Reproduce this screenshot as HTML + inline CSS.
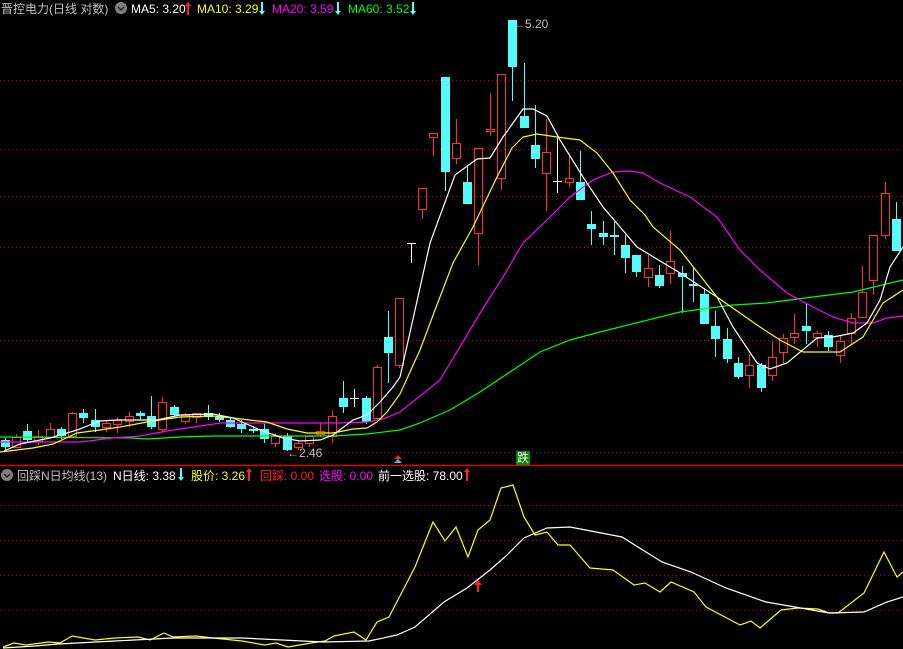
<!DOCTYPE html>
<html><head><meta charset="utf-8">
<style>
html,body{margin:0;padding:0;background:#000;width:903px;height:649px;overflow:hidden}
svg{position:absolute;left:0;top:0}
.t{font-family:"Liberation Sans","Noto Sans CJK SC",sans-serif;font-size:12px}
</style></head>
<body>
<svg id="s" width="903" height="649" xmlns="http://www.w3.org/2000/svg">
<defs>
<path id="au" d="M0,0 l-3,4 h2 v9 h2 v-9 h2 z"/>
<path id="ad" d="M0,13 l-3,-4 h2 v-9 h2 v9 h2 z"/>
</defs>
<g stroke="#c00000" stroke-width="1" stroke-dasharray="1 3" shape-rendering="crispEdges">
<line x1="0" y1="80.5" x2="903" y2="80.5"/>
<line x1="0" y1="149.5" x2="903" y2="149.5"/>
<line x1="0" y1="196.5" x2="903" y2="196.5"/>
<line x1="0" y1="247.5" x2="903" y2="247.5"/>
<line x1="0" y1="340.5" x2="903" y2="340.5"/>
<line x1="0" y1="452.5" x2="903" y2="452.5"/>
<line x1="0" y1="505.5" x2="903" y2="505.5"/>
<line x1="0" y1="540.5" x2="903" y2="540.5"/>
<line x1="0" y1="575.5" x2="903" y2="575.5"/>
<line x1="0" y1="610.5" x2="903" y2="610.5"/>
</g>
<line x1="0" y1="465.5" x2="903" y2="465.5" stroke="#e00000" stroke-width="1.5"/>
<g id="c" shape-rendering="crispEdges"></g>
<g fill="none" stroke-width="1.2">
<polyline stroke="#00ff00" points="0,437 133,438 147,439 180,437 213,436 300,436 333,436 367,434 400,430 420,423 450,410 480,392 510,372 540,352 570,340 600,332 680,312 733,305 767,303 813,297 853,292 903,280"/>
<polyline stroke="#ff00ff" points="0,442 80,442 113,438 140,436 167,431 187,428 220,423 273,423 300,423 340,423 367,422 383,419 400,412 440,380 482,310 503,277 523,243 547,220 570,197 593,180 613,172 630,171 643,173 660,183 690,197 717,217 740,250 760,270 787,293 813,307 833,317 853,323 873,323 887,318 903,316"/>
<polyline stroke="#ffff00" points="0,452 33,448 53,444 77,433 100,430 120,427 147,422 180,417 213,416 233,418 267,422 287,429 307,433 333,433 353,429 367,428 377,422 387,412 400,394 420,350 435,310 453,263 473,227 497,177 512,148 523,137 537,134 557,137 580,140 597,153 613,173 630,200 645,215 653,227 680,250 717,297 760,327 780,340 803,352 840,352 863,337 883,303 903,290"/>
<polyline stroke="#ffffff" points="4,451 20,444 50,438 77,430 100,421 117,420 157,420 180,415 213,414 233,418 260,430 283,438 300,441 320,440 333,435 353,420 367,415 380,402 393,387 400,377 415,310 430,243 455,175 477,159 490,158 503,137 523,109 533,109 547,116 560,140 583,177 603,207 620,227 637,247 680,273 717,297 733,327 757,363 770,369 787,363 817,338 833,337 853,333 867,323 880,300 890,267 903,247"/>
<polyline stroke="#ffff00" points="3,647 14,643 26,645 49,642 60,643 72,636 95,640 115,638 138,637 150,640 164,633 173,637 196,636 213,638 242,641 265,645 276,643 288,647 311,643 325,641 334,636 354,632 366,640 377,622 389,617 415,567 433,522 445,541 456,527 468,557 478,530 490,520 501,488 513,485 524,517 535,535 547,532 558,545 570,545 590,568 613,570 634,585 645,583 660,592 671,582 694,592 706,607 740,625 751,621 760,628 781,610 798,608 818,609 829,613 838,613 864,593 884,552 897,577 903,572"/>
<polyline stroke="#ffffff" points="3,648 35,646 58,644 115,641 173,638 242,638 323,642 369,641 397,635 415,627 444,602 467,588 490,570 507,555 524,538 547,528 570,527 622,537 662,562 691,572 726,588 766,602 795,607 829,613 864,612 887,602 903,597"/>
</g>
<path d="M478,580 l-4,5 h3 v7 h2 v-7 h3 z" fill="#ff2020"/>
<path d="M398,455 l-4,4 h8 z" fill="#ff2020"/><path d="M398,459 l-4,4 h8 z" fill="#40c0ff"/>
<rect x="516" y="451" width="14" height="14" fill="#008800"/>
<text x="517" y="462" class="t" fill="#fff" font-size="12">跌</text>
<text x="513" y="28" class="t" fill="#c0c0c0">←5.20</text>
<text x="287" y="457" class="t" fill="#c0c0c0">←2.46</text>
<g class="t">
<text x="1" y="13" fill="#c0c0c0">晋控电力(日线 对数)</text>
<circle cx="121" cy="8" r="6" fill="#808080"/><path d="M118,7 l3,3 l3,-3" stroke="#222" stroke-width="1.5" fill="none"/>
<text x="131" y="13" fill="#fff">MA5: 3.20</text><use href="#au" x="188" y="2" fill="#ff2020"/>
<text x="197" y="13" fill="#ffff00">MA10: 3.29</text><use href="#ad" x="262" y="2" fill="#54fcfc"/>
<text x="272" y="13" fill="#ff00ff">MA20: 3.59</text><use href="#ad" x="338" y="2" fill="#54fcfc"/>
<text x="348" y="13" fill="#00ff00">MA60: 3.52</text><use href="#ad" x="413" y="2" fill="#54fcfc"/>
<circle cx="7" cy="475" r="6" fill="#808080"/><path d="M4,474 l3,3 l3,-3" stroke="#222" stroke-width="1.5" fill="none"/>
<text x="17" y="480" fill="#c0c0c0">回踩N日均线(13)</text>
<text x="113" y="480" fill="#fff">N日线: 3.38</text><use href="#ad" x="181" y="468" fill="#54fcfc"/>
<text x="191" y="480" fill="#ffff00">股价: 3.26</text><use href="#au" x="249" y="468" fill="#ff2020"/>
<text x="260" y="480" fill="#ff2020">回踩: 0.00</text>
<text x="319" y="480" fill="#ff00ff">选股: 0.00</text>
<text x="378" y="480" fill="#fff">前一选股: 78.00</text><use href="#au" x="467" y="468" fill="#ff2020"/>
</g>
</svg>
<script>
var d=[
['c',440,447,438,450],['r',437,447,434,448],['c',431,440,424,443],['r',436,441,430,445],['r',429,437,423,438],
['c',429,436,427,439],['r',413,436,412,437],['c',413,418,409,423],['c',420,427,409,432],['r',423,427,421,432],
['r',420,424,417,433],['r',416,421,412,427],['c',413,416,411,420],['c',416,427,396,429],['r',402,429,397,433],
['c',407,415,405,417],['r',415,421,413,424],['r',413,417,413,423],['c',413,417,405,420],['c',417,420,413,422],
['c',420,427,417,428],['c',424,429,420,433],['c',429,431,426,433],['c',429,439,424,443],['r',436,443,433,447],
['c',436,450,433,451],['r',443,447,440,450],['r',436,443,436,447],['r',431,434,423,437],['r',416,436,410,443],
['c',398,407,381,413],['w',398,399,389,407],['c',398,422,396,424],['r',367,418,365,420],['c',337,353,311,383],
['r',298,365,298,368],['w',243,244,243,263],['r',188,209,188,219],['r',133,137,133,156],['c',77,172,77,191],
['r',143,158,119,164],['c',182,204,167,204],['r',148,233,148,265],['r',129,131,93,136],['r',74,178,74,190],
['c',20,67,20,101],['c',116,128,63,128],['c',145,159,105,168],['r',152,173,119,211],['w',181,182,138,193],
['r',178,182,156,187],['c',182,200,151,200],['c',224,229,211,245],['c',233,237,221,245],['c',235,237,222,255],
['c',245,258,235,273],['c',255,272,255,277],['r',268,277,255,287],['c',275,286,265,288],['r',261,273,231,284],
['c',273,277,266,313],['c',284,286,268,302],['c',294,324,289,324],['c',326,339,311,357],['c',339,359,328,363],
['c',363,377,357,379],['r',365,375,354,388],['c',365,388,363,392],['r',357,375,342,381],['r',338,352,334,363],
['r',333,337,314,344],['c',326,331,304,344],['r',333,337,331,347],['c',335,347,331,351],['r',341,355,335,363],
['r',318,333,313,344],['r',292,317,266,317],['r',235,280,235,295],['r',193,235,182,239],['c',219,251,202,251]];
var g=document.getElementById('c'),h='';
for(var i=0;i<d.length;i++){var x=Math.round(4.5+i*11.285),c=d[i],t=c[1],b=c[2];
if(b-t<1)b=t+1;
if(c[0]=='c'){h+='<line x1="'+(x+.5)+'" y1="'+c[3]+'" x2="'+(x+.5)+'" y2="'+c[4]+'" stroke="#54fcfc"/><rect x="'+(x-4)+'" y="'+t+'" width="9" height="'+(b-t)+'" fill="#54fcfc"/>';}
else if(c[0]=='r'){h+='<line x1="'+(x+.5)+'" y1="'+c[3]+'" x2="'+(x+.5)+'" y2="'+t+'" stroke="#ff3232"/><line x1="'+(x+.5)+'" y1="'+b+'" x2="'+(x+.5)+'" y2="'+c[4]+'" stroke="#ff3232"/><rect x="'+(x-3.5)+'" y="'+(t+.5)+'" width="8" height="'+(b-t)+'" fill="none" stroke="#ff3232"/>';}
else{h+='<line x1="'+(x+.5)+'" y1="'+c[3]+'" x2="'+(x+.5)+'" y2="'+c[4]+'" stroke="#fff"/><line x1="'+(x-4)+'" y1="'+(t+.5)+'" x2="'+(x+5)+'" y2="'+(t+.5)+'" stroke="#fff"/>';}}
g.innerHTML=h;
</script>
</body></html>
